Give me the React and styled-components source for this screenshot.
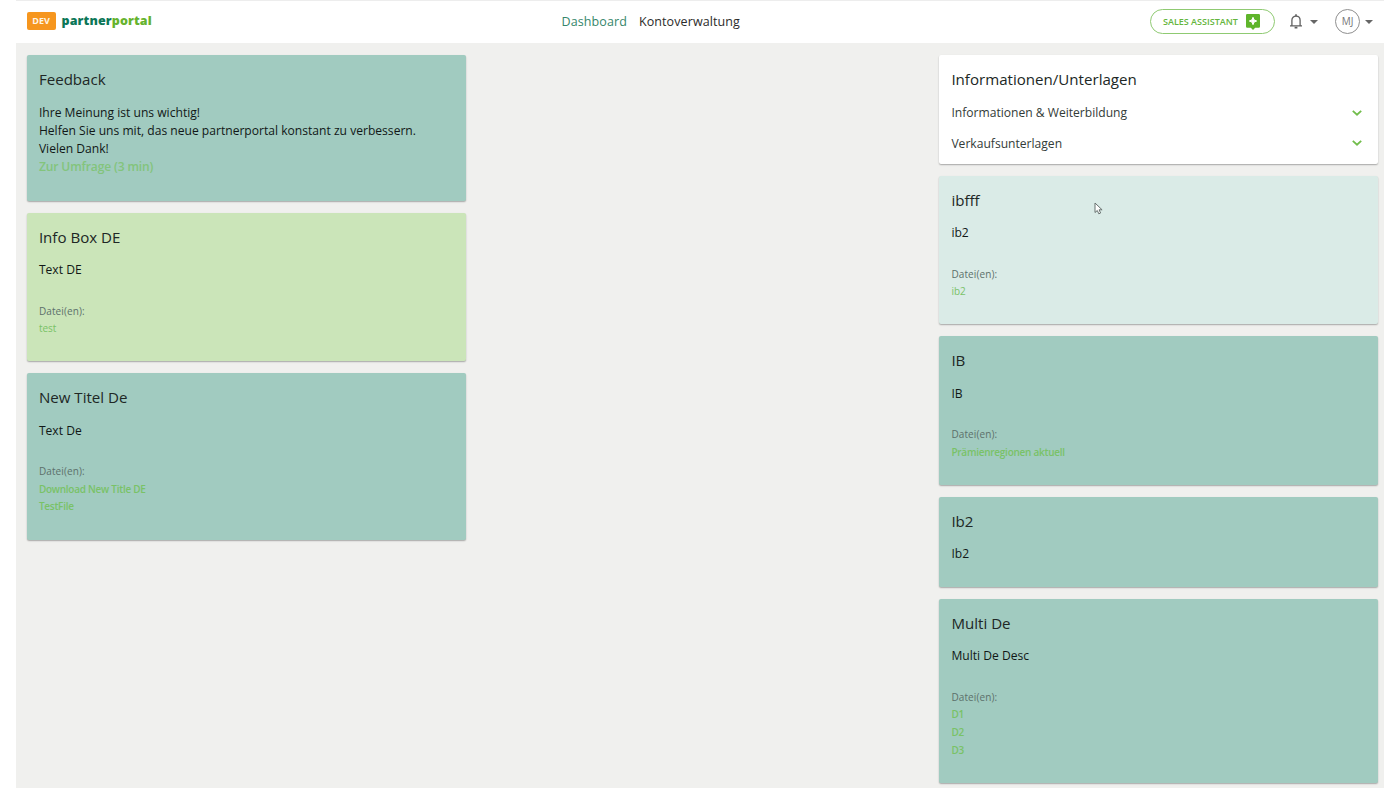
import React from 'react';
import styled, { createGlobalStyle } from 'styled-components';

const GlobalStyle = createGlobalStyle`
  * { box-sizing: border-box; }
  html, body { margin: 0; height: 100%; background: #fff; overflow: hidden; }
  body { font-family: 'Open Sans', 'Noto Sans', sans-serif; color: #1d2b27; }
`;

const Page = styled.div`
  position: relative;
  width: 1368px;
  height: 788px;
  margin: 0 auto;
  background: #f0f0ee;
  overflow: hidden;
`;

const Header = styled.header`
  display: grid;
  grid-template-columns: 535px auto 1fr;
  align-items: center;
  height: 43px;
  padding: 0 11px 0 10.5px;
  background: #fff;
  border-top: 1px solid #ededed;
`;

const Brand = styled.div`
  display: flex;
  align-items: center;
  gap: 6px;
  margin-top: -3px;
`;

const EnvTag = styled.span`
  width: 29px;
  height: 18px;
  border-radius: 2px;
  background: #f6961e;
  color: #fff5e6;
  font-size: 9px;
  font-weight: 700;
  line-height: 18px;
  text-align: center;
`;

const BrandName = styled.span`
  font-size: 12.5px;
  font-weight: 800;
  line-height: 18px;
  letter-spacing: 0.12px;
  color: #0b7657;
  span { color: #66b32e; }
`;

const Nav = styled.nav`
  display: flex;
  gap: 12px;
  margin-top: -1px;
`;

const NavItem = styled.a`
  font-size: 12.5px;
  line-height: 18px;
  letter-spacing: 0.1px;
  color: ${p => (p.$active ? '#35866a' : '#2b2b2b')};
`;

const Tools = styled.div`
  display: flex;
  justify-content: flex-end;
  align-items: center;
  margin-top: -1px;
`;

const AssistantButton = styled.button`
  display: flex;
  align-items: center;
  justify-content: space-between;
  width: 125px;
  height: 25px;
  padding: 0 14px 0 12px;
  margin-right: 14px;
  border: 1px solid #8fca72;
  border-radius: 13px;
  background: #fff;
  color: #64b53c;
  font: 600 9px 'Open Sans', sans-serif;
  white-space: nowrap;
`;

const Caret = styled.span`
  width: 0;
  height: 0;
  border: 4px solid transparent;
  border-top-color: #666;
  border-bottom: 0;
  margin-left: ${p => p.$gap};
`;

const Avatar = styled.span`
  width: 25px;
  height: 25px;
  margin-left: 17px;
  border: 1px solid #8f8f8f;
  border-radius: 50%;
  color: #777;
  font-size: 10px;
  line-height: 22px;
  text-align: center;
`;

const Board = styled.main`
  display: flex;
  justify-content: space-between;
  align-items: flex-start;
  padding: 12px 6px 0 10.5px;
`;

const Column = styled.section`
  display: flex;
  flex-direction: column;
  gap: 11.6px;
  width: 439px;
`;

const tones = { teal: '#a1cbc0', lime: '#cbe5b9', mint: '#daebe7', white: '#fff' };

const Card = styled.article`
  padding: 11.4px 12.4px ${p => p.$bottom || '23.5px'};
  border-radius: 2px;
  background: ${p => tones[p.$tone]};
  box-shadow: 0 1px 1.5px rgba(0, 0, 0, 0.3);
`;

const Title = styled.h2`
  margin: 0 0 11.4px;
  font-size: 15.1px;
  font-weight: 400;
  line-height: 26px;
  color: #202725;
`;

const Copy = styled.p`
  margin: 0;
  font-size: 12.1px;
  line-height: 18.2px;
  color: #111817;
`;

const CopyLink = styled.a`
  font-weight: 600;
  letter-spacing: -0.15px;
  color: #83c47c;
`;

const Files = styled.div`
  display: flex;
  flex-direction: column;
  margin-top: 23px;
  font-size: 10px;
  line-height: 17.7px;
`;

const FilesLabel = styled.span`
  letter-spacing: 0.1px;
  color: #5c706b;
`;

const FileLink = styled.a`
  font-weight: ${p => (p.$strong ? 600 : 400)};
  letter-spacing: ${p => (p.$strong ? '-0.26px' : '0')};
  color: #79c267;
`;

const FoldRow = styled.div`
  display: flex;
  align-items: center;
  justify-content: space-between;
  height: 18.2px;
  padding-right: 4px;
  font-size: 12.1px;
  color: #333b38;
  & + & { margin-top: 12px; }
`;

const Pointer = styled.svg`
  position: absolute;
  left: 1078px;
  top: 202px;
`;

const Chevron = () => (
  <svg width="10" height="6" viewBox="0 0 10 6" fill="none" stroke="#72bd4c" strokeWidth="1.8">
    <path d="M.8.8 5 4.7 9.2.8" />
  </svg>
);

const AssistantIcon = () => (
  <svg width="14" height="16" viewBox="0 0 14 16">
    <path d="M1.2 0h11.6q1.2 0 1.2 1.2v11.3q0 1.2-1.2 1.2H9.2L7 16l-2.2-2.3H1.2Q0 13.700 0 12.500V1.200Q0 0 1.200 0Z" fill="#5fb52b" />
    <path d="M7 3.300 8.100 5.900 10.700 7 8.100 8.100 7 10.700 5.900 8.100 3.300 7 5.900 5.900Z" fill="#fff" stroke="#fff" strokeWidth="1" />
  </svg>
);

const Bell = () => (
  <svg width="14" height="15" viewBox="0 0 14 15" fill="none" stroke="#606060" strokeWidth="1.3">
    <path d="M1 11.900h12M2.900 11.700V6.300C2.900 3.800 4.700 2.200 7 2.200s4.100 1.600 4.100 4.100v5.400" />
    <path d="M7 .3v2M5.600 13.600h2.800" strokeWidth="1.600" />
  </svg>
);

function InfoCard({ tone = 'teal', title, text, files, strong }) {
  return (
    <Card $tone={tone}>
      <Title>{title}</Title>
      <Copy>{text}</Copy>
      {files && (
        <Files>
          <FilesLabel>Datei(en):</FilesLabel>
          {files.map(f => <FileLink key={f} $strong={strong}>{f}</FileLink>)}
        </Files>
      )}
    </Card>
  );
}

export default function App() {
  return (
    <Page>
      <GlobalStyle />
      <Header>
        <Brand>
          <EnvTag>DEV</EnvTag>
          <BrandName>partner<span>portal</span></BrandName>
        </Brand>
        <Nav>
          <NavItem $active>Dashboard</NavItem>
          <NavItem>Kontoverwaltung</NavItem>
        </Nav>
        <Tools>
          <AssistantButton>SALES ASSISTANT<AssistantIcon /></AssistantButton>
          <Bell />
          <Caret $gap="7px" />
          <Avatar>MJ</Avatar>
          <Caret $gap="5px" />
        </Tools>
      </Header>
      <Board>
        <Column>
          <Card $tone="teal" $bottom="24.4px">
            <Title>Feedback</Title>
            <Copy>
              Ihre Meinung ist uns wichtig!<br />
              Helfen Sie uns mit, das neue partnerportal konstant zu verbessern.<br />
              Vielen Dank!<br />
              <CopyLink>Zur Umfrage (3 min)</CopyLink>
            </Copy>
          </Card>
          <InfoCard tone="lime" title="Info Box DE" text="Text DE" files={['test']} />
          <InfoCard title="New Titel De" text="Text De" files={['Download New Title DE', 'TestFile']} strong />
        </Column>
        <Column>
          <Card $tone="white" $bottom="11.8px">
            <Title>Informationen/Unterlagen</Title>
            <FoldRow>Informationen &amp; Weiterbildung<Chevron /></FoldRow>
            <FoldRow>Verkaufsunterlagen<Chevron /></FoldRow>
          </Card>
          <InfoCard tone="mint" title="ibfff" text="ib2" files={['ib2']} />
          <InfoCard title="IB" text="IB" files={['Prämienregionen aktuell']} strong />
          <InfoCard title="Ib2" text="Ib2" />
          <InfoCard title="Multi De" text="Multi De Desc" files={['D1', 'D2', 'D3']} strong />
        </Column>
      </Board>
      <Pointer width="10" height="13" viewBox="0 0 10 13">
        <path d="M1 1v9.500l2.300-2 1.500 3.300 1.800-.8-1.500-3.200h3Z" fill="#fff" stroke="#66706e" strokeWidth="1" />
      </Pointer>
    </Page>
  );
}
